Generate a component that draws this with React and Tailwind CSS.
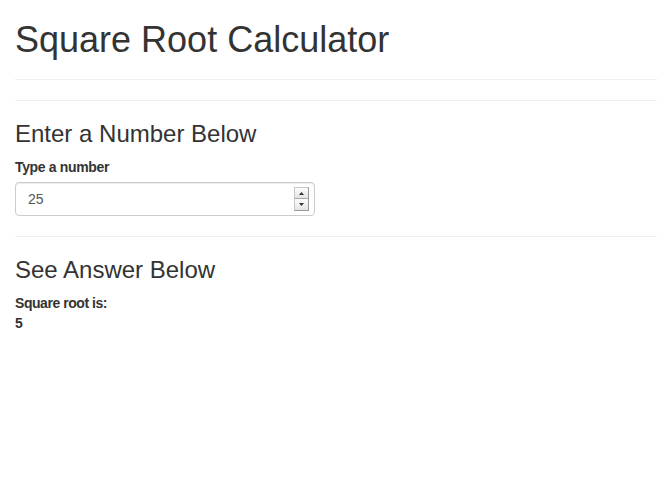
export default function App() {
  const font = { fontFamily: '"Liberation Sans", Arial, Helvetica, sans-serif' };
  return (
    <div className="min-h-[480px] bg-white px-[15px] text-[14px] leading-[20px] text-[#333]" style={font}>
      <div className="border-b border-[#eee] pb-[9px] mb-[20px]">
        <h1 className="pt-[20px] mb-[10px] text-[36px] leading-[39.6px] font-normal">Square Root Calculator</h1>
      </div>
      <hr className="border-0 border-t border-[#eee] mb-[20px]" />
      <h3 className="text-[24px] leading-[26.4px] font-normal mb-[10px]">Enter a Number Below</h3>
      <div className="mb-[20px]">
        <label className="block font-bold tracking-[-0.35px] mb-[5px]">Type a number</label>
        <div className="flex items-center w-[300px] h-[34px] border border-[#ccc] rounded-[4px] shadow-[inset_0_1px_1px_rgba(0,0,0,0.075)] pl-[12px] pr-[4px]">
          <input
            type="text"
            defaultValue="25"
            className="flex-1 min-w-0 outline-none bg-transparent text-[14px] text-[#555]"
            style={font}
          />
          <div className="flex flex-col w-[15px] mr-[1px]">
            <div className="h-[12px] flex items-center justify-center bg-gradient-to-b from-[#fdfdfd] to-[#e4e4e4] border border-[#c8c8c8] border-r-[#999] border-b-[#aaa]">
              <svg width="5" height="3" viewBox="0 0 5 3"><path d="M2.5 0L5 3H0z" fill="#333" /></svg>
            </div>
            <div className="h-[12px] flex items-center justify-center bg-gradient-to-b from-[#fdfdfd] to-[#e4e4e4] border border-t-0 border-[#c8c8c8] border-r-[#999] border-b-[#999]">
              <svg width="5" height="3" viewBox="0 0 5 3"><path d="M0 0H5L2.5 3z" fill="#333" /></svg>
            </div>
          </div>
        </div>
      </div>
      <hr className="border-0 border-t border-[#eee] mb-[20px]" />
      <h3 className="text-[24px] leading-[26.4px] font-normal mb-[10px]">See Answer Below</h3>
      <div className="font-bold tracking-[-0.45px]">Square root is:</div>
      <div className="font-bold">5</div>
    </div>
  );
}
